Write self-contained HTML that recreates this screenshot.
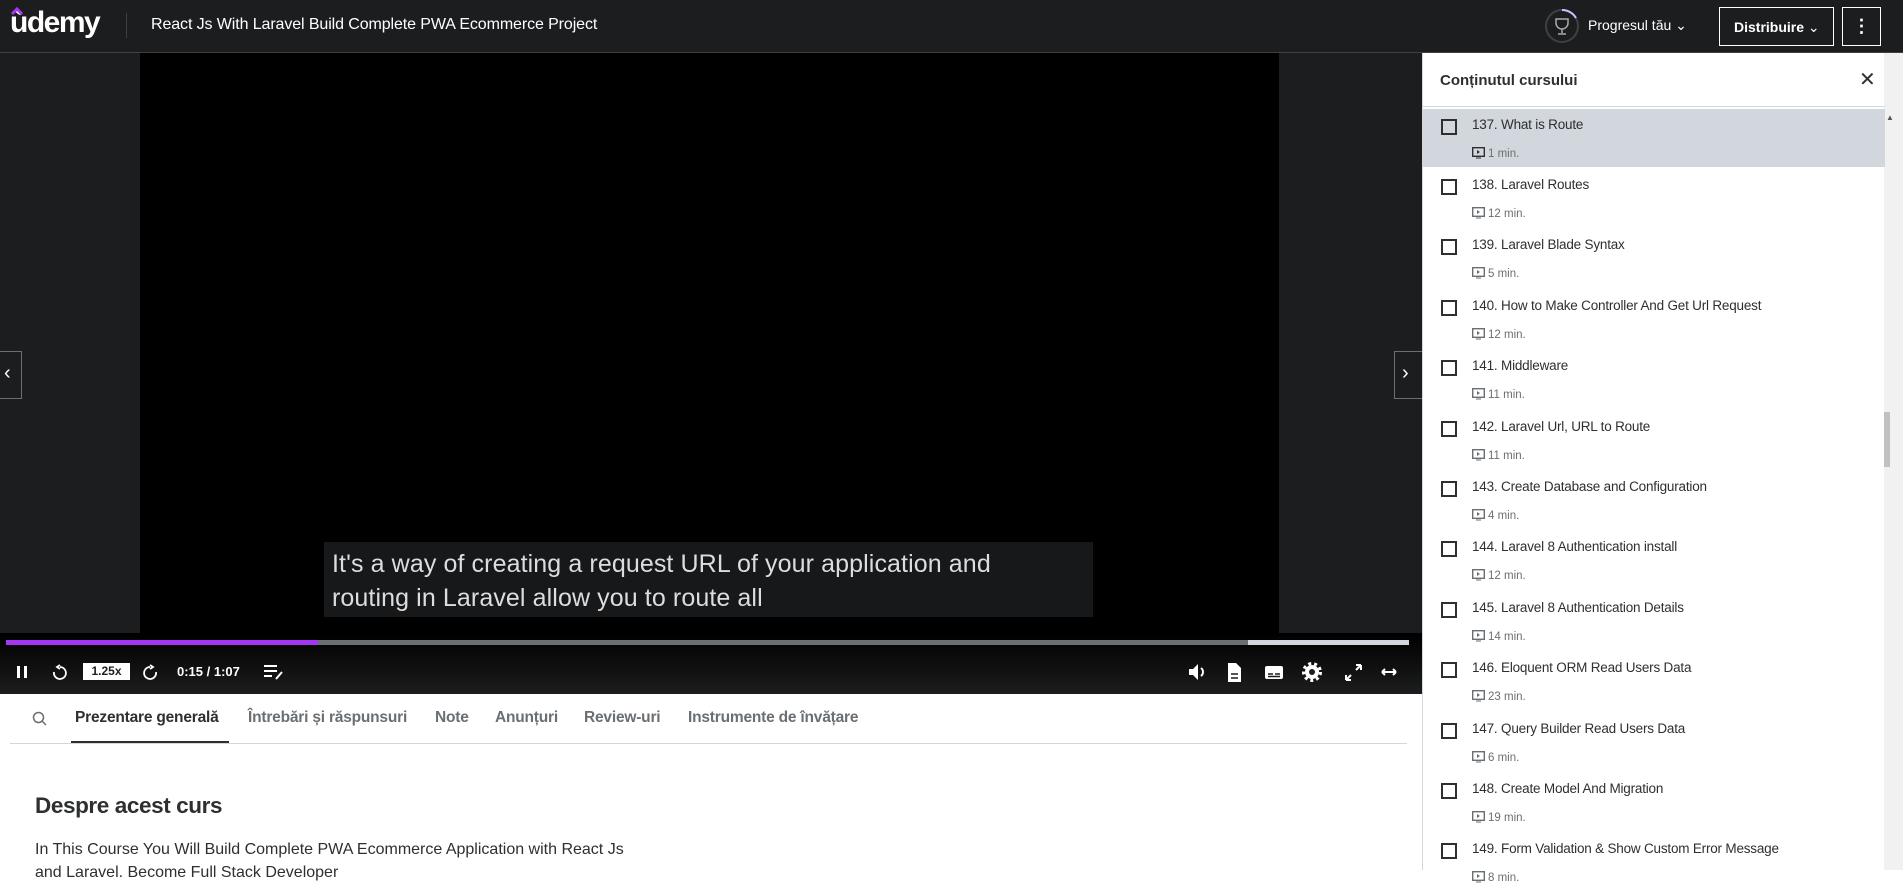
<!DOCTYPE html>
<html><head><meta charset="utf-8"><style>
*{box-sizing:border-box;margin:0;padding:0}
body{width:1903px;height:870px;overflow:hidden;background:#fff;font-family:"Liberation Sans",sans-serif;position:relative}
.hdr{position:absolute;left:0;top:0;width:1903px;height:53px;background:#1c1d1f;border-bottom:1px solid #3e4143}
.abs{position:absolute}
.video{position:absolute;left:0;top:53px;width:1422px;height:641px;background:#1c1d1f}
.side{position:absolute;left:1422px;top:53px;width:462px;height:817px;background:#fff;border-left:1px solid #d1d7dc}
.item{position:absolute;left:0;width:462px;height:60px}
.cb{position:absolute;left:18px;top:10px;width:16px;height:16px;border:2px solid #2d2f31}
.it{position:absolute;left:49px;top:8px;font-size:13.5px;color:#2d2f31;white-space:nowrap;letter-spacing:-0.2px}
.dur{position:absolute;left:49px;top:38px;font-size:11.5px;color:#6a6f73;white-space:nowrap}
.dur svg{vertical-align:-2px;margin-right:3px}
.tab{position:absolute;top:709px;font-size:15.5px;font-weight:bold;color:#6a6f73;white-space:nowrap;letter-spacing:-0.2px}
</style></head><body>
<div class="hdr">
  <div class="abs" style="left:10px;top:6px;color:#fff;font-size:30px;font-weight:bold;letter-spacing:-1.5px;">ùdemy</div>
  <svg class="abs" style="left:11px;top:7px" width="12" height="8"><path d="M1 7 L6 2 L11 7" stroke="#a435f0" stroke-width="3" fill="none"/></svg>
  <div class="abs" style="left:126px;top:13px;width:1px;height:25px;background:#3e4143"></div>
  <div class="abs" style="left:151px;top:16px;color:#fff;font-size:16px;letter-spacing:-0.1px">React Js With Laravel Build Complete PWA Ecommerce Project</div>
  <svg class="abs" style="left:1544px;top:8px" width="36" height="36"><circle cx="18" cy="18" r="16" stroke="#3e4143" stroke-width="2" fill="none"/><path d="M18 2 A16 16 0 0 1 32 10" stroke="#c0c4fc" stroke-width="2" fill="none"/><path d="M12 11h12v4a6 6 0 0 1-12 0z M18 21v4 M14 26h8" stroke="#aaa" stroke-width="1.5" fill="none"/></svg>
  <div class="abs" style="left:1588px;top:17px;color:#fff;font-size:14px">Progresul tău ⌄</div>
  <div class="abs" style="left:1719px;top:7px;width:115px;height:39px;border:1px solid #fff;color:#fff;font-size:14px;font-weight:bold;padding:11px 0 0 14px">Distribuire <span style="font-weight:normal">⌄</span></div>
  <div class="abs" style="left:1842px;top:7px;width:39px;height:39px;border:1px solid #fff;color:#fff;font-size:18px;font-weight:bold;text-align:center;line-height:36px">⋮</div>
</div>
<div class="abs" style="left:1884px;top:53px;width:19px;height:817px;background:#f1f1f1"></div>
<div class="abs" style="left:1880px;top:412px;width:10px;height:55px;background:#c1c1c1"></div>
<div class="abs" style="left:1886px;top:113px;font-size:8px;color:#555">▲</div>
<div class="video">
  <div class="abs" style="left:140px;top:0;width:1139px;height:641px;background:#000"></div>
  <div class="abs" style="left:324px;top:489px;width:769px;height:75px;background:#17181a;color:#ddd;font-size:25px;line-height:34px;padding:5px 8px;letter-spacing:0.1px;white-space:nowrap">It's a way of creating a request URL of your application and<br>routing in Laravel allow you to route all</div>
  <div class="abs" style="left:0;top:298px;width:22px;height:48px;border:1px solid #6a6f73;border-left:none;color:#fff;font-size:20px;padding:10px 4px">‹</div>
  <div class="abs" style="left:1394px;top:298px;width:28px;height:48px;border:1px solid #6a6f73;border-right:none;color:#fff;font-size:20px;padding:10px 7px">›</div>
  <div class="abs" style="left:0;top:580px;width:1422px;height:61px;background:linear-gradient(#000,#111 60%,#1c1d1f)"></div>
  <div class="abs" style="left:6px;top:587px;width:1403px;height:5px;background:#6a6f73"></div>
  <div class="abs" style="left:1248px;top:587px;width:161px;height:5px;background:#d1d7dc"></div>
  <div class="abs" style="left:6px;top:587px;width:312px;height:5px;background:#a435f0"></div>
  <svg class="abs" style="left:14px;top:610px" width="170" height="18">
    <rect x="3" y="3" width="3" height="12" fill="#fff"/><rect x="10" y="3" width="3" height="12" fill="#fff"/>
    <path d="M46 4 A6 6 0 1 1 40 9 M46 2 L43 4 L46 6" stroke="#fff" stroke-width="1.8" fill="none"/>
  </svg>
  <div class="abs" style="left:83px;top:610px;width:47px;height:17px;background:#fff;color:#1c1d1f;font-size:12px;font-weight:bold;text-align:center;line-height:17px">1.25x</div>
  <svg class="abs" style="left:142px;top:610px" width="20" height="20"><path d="M8 4 A6 6 0 1 0 14 9 M8 2 L11 4 L8 6" stroke="#fff" stroke-width="1.8" fill="none"/></svg>
  <div class="abs" style="left:177px;top:611px;color:#fff;font-size:13px;font-weight:bold">0:15 / 1:07</div>
  <svg class="abs" style="left:262px;top:610px" width="24" height="18"><path d="M2 3h13M2 8h13M2 13h8" stroke="#fff" stroke-width="2"/><path d="M14 16l6-7" stroke="#fff" stroke-width="2"/></svg>
  <svg class="abs" style="left:1186px;top:607px" width="220" height="24">
    <path d="M3 9h4l5-5v16l-5-5H3z" fill="#fff"/><path d="M15 8a5 5 0 0 1 0 8" stroke="#fff" stroke-width="2" fill="none"/>
    <path d="M42 3h8l5 5v14H42z" fill="#fff"/><path d="M45 14h7M45 18h7" stroke="#1c1d1f" stroke-width="1.5"/>
    <rect x="79" y="6" width="18" height="13" rx="2" fill="#fff"/><path d="M82 14h5M89 14h5M82 16.5h12" stroke="#1c1d1f" stroke-width="1.5"/>
    <circle cx="126" cy="12" r="7" fill="#fff"/><circle cx="126" cy="12" r="8.5" fill="none" stroke="#fff" stroke-width="3" stroke-dasharray="3 3"/><circle cx="126" cy="12" r="3" fill="#1c1d1f"/>
    <path d="M160 20l5-5M175 5l-5 5M160 20v-5M160 20h5M175 5h-5M175 5v5" stroke="#fff" stroke-width="2" fill="none"/>
    <path d="M196 12h14M196 12l3-3M196 12l3 3M210 12l-3-3M210 12l-3 3" stroke="#fff" stroke-width="2" fill="none"/>
  </svg>
</div>
<svg class="abs" style="left:32px;top:711px" width="16" height="16"><circle cx="6.5" cy="6.5" r="5" stroke="#6a6f73" stroke-width="1.5" fill="none"/><path d="M10 10l4 4" stroke="#6a6f73" stroke-width="1.5"/></svg>
<div class="tab" style="left:75px;color:#2d2f31">Prezentare generală</div>
<div class="tab" style="left:248px">Întrebări și răspunsuri</div>
<div class="tab" style="left:435px">Note</div>
<div class="tab" style="left:495px">Anunțuri</div>
<div class="tab" style="left:584px">Review-uri</div>
<div class="tab" style="left:688px">Instrumente de învățare</div>
<div class="abs" style="left:71px;top:741px;width:158px;height:3px;background:#2d2f31"></div>
<div class="abs" style="left:10px;top:743px;width:1397px;height:1px;background:#d1d7dc"></div>
<div class="abs" style="left:35px;top:793px;font-size:22.5px;font-weight:bold;color:#2d2f31;letter-spacing:-0.4px">Despre acest curs</div>
<div class="abs" style="left:35px;top:838px;font-size:16px;color:#2d2f31;line-height:23px;letter-spacing:0px">In This Course You Will Build Complete PWA Ecommerce Application with React Js<br>and Laravel. Become Full Stack Developer</div>
<div class="side">
  <div class="abs" style="left:17px;top:19px;font-size:15px;font-weight:bold;color:#2d2f31">Conținutul cursului</div>
  <div class="abs" style="left:436px;top:14px;font-size:20px;color:#2d2f31">✕</div>
  <div class="abs" style="left:0;top:53px;width:462px;height:1px;background:#d1d7dc"></div>
  <div class="item" style="top:56px;background:#d1d7dc;height:58px"><div class="cb"></div><div class="it">137. What is Route</div><div class="dur"><svg width="13" height="12"><rect x="0.7" y="0.7" width="11.6" height="8.6" fill="none" stroke="#2d2f31" stroke-width="1.4"/><path d="M5 3l3 2-3 2z" fill="#2d2f31"/><path d="M4 11h5" stroke="#2d2f31"/></svg>1 min.</div></div>
  <div id="list"></div>
</div>
<script>
var d=[["138. Laravel Routes","12"],["139. Laravel Blade Syntax","5"],["140. How to Make Controller And Get Url Request","12"],["141. Middleware","11"],["142. Laravel Url, URL to Route","11"],["143. Create Database and Configuration","4"],["144. Laravel 8 Authentication install","12"],["145. Laravel 8 Authentication Details","14"],["146. Eloquent ORM Read Users Data","23"],["147. Query Builder Read Users Data","6"],["148. Create Model And Migration","19"],["149. Form Validation & Show Custom Error Message","8"]];
var h="";var ic='<svg width="13" height="12"><rect x="0.7" y="0.7" width="11.6" height="8.6" fill="none" stroke="#6a6f73" stroke-width="1.4"/><path d="M5 3l3 2-3 2z" fill="#6a6f73"/><path d="M4 11h5" stroke="#6a6f73"/></svg>';
for(var i=0;i<d.length;i++){h+='<div class="item" style="top:'+(116+i*60.4)+'px"><div class="cb"></div><div class="it">'+d[i][0].replace("&","&amp;")+'</div><div class="dur">'+ic+d[i][1]+' min.</div></div>';}
document.getElementById("list").outerHTML=h;
</script>
</body></html>
